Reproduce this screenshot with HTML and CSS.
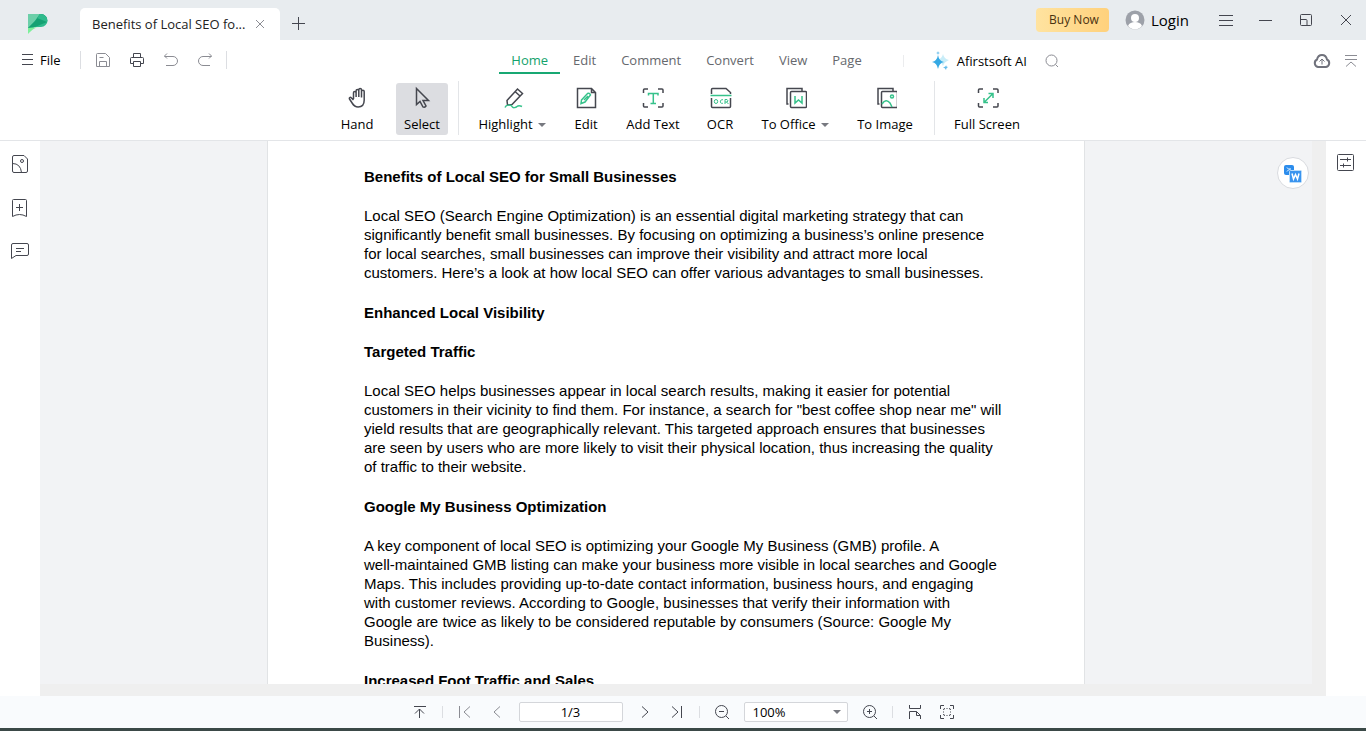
FILE: index.html
```html
<!DOCTYPE html>
<html lang="en">
<head>
<meta charset="utf-8">
<meta name="viewport" content="width=device-width, initial-scale=1">
<title>Benefits of Local SEO for Small Businesses</title>
<link rel="stylesheet" href="styles.css">
</head>
<body>
<div class="app">
  <header class="titlebar">
    <svg class="logo" width="20" height="20" viewBox="0 0 20 20" aria-hidden="true"><path fill="#2fba8c" d="M0 0h13a6.500 6.500 0 0 1 0 13H7L0 17z"/><path fill="#6ccfa9" d="M0 0h12L7 7 0 14z"/><path fill="#15a273" d="M7 7l5-7h1a6.500 6.500 0 0 1 6 8L7 13l-7 1z"/><path fill="#2fba8c" d="M12 0h1a6.500 6.500 0 0 1 6 8L9 4z"/><path fill="#7df09a" d="M0 20v-6l12-1C7 13 4 16 0 20z"/></svg>
    <div class="doc-tab">
      <span class="doc-name">Benefits of Local SEO fo...</span>
      <button class="icon-btn tab-close" aria-label="Close tab"><svg width="10" height="10" viewBox="0 0 10 10"><path d="M1 1l8 8M9 1l-8 8"/></svg></button>
    </div>
    <button class="icon-btn new-tab" aria-label="New tab"><svg class="dark" width="14" height="14" viewBox="0 0 14 14"><path d="M6.500 0v13M0 6.500h13"/></svg></button>
    <div class="window-tools">
      <button class="buy">Buy Now</button>
      <button class="login"><svg width="20" height="20" viewBox="0 0 20 20"><circle cx="10" cy="10" r="9.500" fill="#9da1a9" stroke="none"/><path d="M3 16c1-3 4-4 7-4s6 1 7 4c-4 4.500-10 4.500-14 0z" fill="#fff" stroke="none"/><circle cx="10" cy="8" r="4" fill="#fff" stroke="none"/></svg>Login</button>
      <button class="icon-btn win" aria-label="Menu"><svg class="dark" width="14" height="12" viewBox="0 0 14 12"><path d="M0 1.500h14M0 6.500h14M0 11.500h14"/></svg></button>
      <button class="icon-btn win" aria-label="Minimize"><svg class="dark" width="14" height="12" viewBox="0 0 14 12"><path d="M0 6.500h13"/></svg></button>
      <button class="icon-btn win" aria-label="Restore"><svg class="dark" width="12" height="12" viewBox="0 0 12 12"><rect x=".5" y=".5" width="11" height="11" rx="1"/><path d="M1 5.500h5q1 0 1 1V11"/></svg></button>
      <button class="icon-btn win" aria-label="Close"><svg class="dark" width="12" height="12" viewBox="0 0 12 12"><path d="M1 1l10 10M11 1L1 11"/></svg></button>
    </div>
  </header>

  <div class="menubar">
    <div class="quick">
      <button class="file"><svg class="dark" width="12" height="12" viewBox="0 0 12 12"><path d="M0 .5h11M0 5.500h11M0 10.500h11"/></svg>File</button>
      <span class="rule"></span>
      <button class="icon-btn q" aria-label="Save"><svg width="16" height="16" viewBox="0 0 16 16"><path d="M1.500 14.500v-12q0-1 1-1h8l4 4v9zM4.500 14.500v-5h7v5M4.500 5.500h4"/></svg></button>
      <button class="icon-btn q" aria-label="Print"><svg class="ink" width="16" height="16" viewBox="0 0 16 16"><path d="M4.500 5V1.500h7V5M4 11.500H1.500v-5q0-1 1-1h11q1 0 1 1v5H12M4.500 9.500h7v5h-7z"/></svg></button>
      <button class="icon-btn q" aria-label="Undo"><svg width="16" height="16" viewBox="0 0 16 16"><path d="M4 1.500L1.500 4 4 6.500M1.500 4.500H10a4 4 0 0 1 0 9H3"/></svg></button>
      <button class="icon-btn q" aria-label="Redo"><svg width="16" height="16" viewBox="0 0 16 16"><path d="M12 1.500L14.500 4 12 6.500M14.500 4.500H6a4 4 0 0 0 0 9h7"/></svg></button>
      <span class="rule"></span>
    </div>
    <nav class="tabs">
      <a class="active" href="#">Home</a><a href="#">Edit</a><a href="#">Comment</a><a href="#">Convert</a><a href="#">View</a><a href="#">Page</a>
    </nav>
    <div class="extras">
      <span class="rule faint"></span>
      <button class="ai"><svg width="18" height="20" viewBox="0 0 18 20"><g stroke="none"><path fill="#c9edf8" d="M11 3q1 5 6 6-5 2-6 6-2-5-6-6 5-1 6-6z"/><path fill="#35a9e4" d="M6 4q1 6 6 7-5 1-6 7-1-6-6-7 5-1 6-7z"/><path fill="#65bceb" d="M6 0q0 2 2 2-2 0-2 2 0-2-2-2 2 0 2-2zM14 14q0 2 2 2-2 1-2 3-1-2-3-3 3 0 3-2z"/></g></svg>Afirstsoft AI</button>
      <button class="icon-btn find" aria-label="Search"><svg width="14" height="14" viewBox="0 0 14 14"><circle cx="6.500" cy="6.500" r="5.500"/><path d="M10.500 10.500l2.500 2.500"/></svg></button>
      <button class="icon-btn cloud" aria-label="Upload to cloud"><svg width="18" height="16" viewBox="0 0 18 16"><path stroke="#70727c" stroke-width="2" d="M5 14a4 4 0 0 1-1-7.500Q5 2 9 2t5 4.500A4 4 0 0 1 13 14z"/><path stroke="#70727c" d="M9 11.500v-5M6.500 8.500L9 6l2.500 2.500"/></svg></button>
      <button class="icon-btn fold" aria-label="Collapse toolbar"><svg width="14" height="14" viewBox="0 0 14 14"><path d="M1 1.500h12M1 5.500h12M2 12.500l5-4.500 5 4.500"/></svg></button>
    </div>
  </div>

  <div class="toolbar">
    <button class="tool hand"><svg class="big" width="24" height="24" viewBox="-3 0 24 24"><path d="M5.500 13V6.800a1.300 1.300 0 0 1 2.600 0V11M8.100 11V4.800a1.300 1.300 0 0 1 2.700 0V11M10.800 11V3.800a1.300 1.300 0 0 1 2.700 0v7.700M13.500 11.500V5.500a1.300 1.300 0 0 1 2.700 0V14c0 4.500-2.500 7-6.100 7-3 0-4.500-1.500-6-4L1.500 13c-.7-1.200.8-2.200 1.700-1.300L5.500 14"/></svg><span>Hand</span></button>
    <button class="tool selected"><svg class="big" width="24" height="24" viewBox="0 0 24 24"><path d="M6.500 2.500v16l3.500-3 3 5.500q1.500 1 3-1l-3-5.500h5.500z"/></svg><span>Select</span></button>
    <span class="rule tall first"></span>
    <button class="tool highlight"><svg class="big" width="24" height="24" viewBox="-2 0 24 24"><path d="M5 14.500L15.500 3l5 4.500L10 18.500l-4.500.500zM13 5.500l5 4.500"/><path class="green" d="M3 21.500c1-3 6-3 7-1s4 1 5 0 3-1 5 0"/></svg><span>Highlight<i class="caret"></i></span></button>
    <button class="tool"><svg class="big" width="24" height="24" viewBox="-1 0 24 24"><path d="M2.500 2.500h14l4 4v15h-18zM16.500 2.500v4h4"/><path class="green" d="M6.500 14l6-6.500q2-1 3 1.500l-5.500 7-4 1.500zM9 14l4-4"/></svg><span>Edit</span></button>
    <button class="tool add-text"><svg class="big" width="24" height="24" viewBox="0 0 24 24"><path d="M2.500 7V4q0-1 1-1H7M17 3h4q1 0 1 1v3M22 17v3q0 1-1 1h-4M7 21H3.500q-1 0-1-1v-3"/><path class="green" d="M7.500 9.500V7.500h9.500v2M12.300 7.500V17M9.500 17.500H15"/></svg><span>Add Text</span></button>
    <button class="tool"><svg class="big" width="24" height="24" viewBox="-1 0 24 24"><path d="M2.500 8V3.500q0-1 1-1H17l4.500 4V8M2.500 12v8.500q0 1 1 1h17q1 0 1-1V12"/><path class="green" d="M1.500 9.500h21"/><g class="green thin"><ellipse cx="7" cy="15.500" rx="1.700" ry="2"/><path d="M14 13.800c-3-1.300-4 4.700 0 3.400M16 18v-4.500h2q2 1.500 0 2.500H16M17.500 16l2 2"/></g></svg><span>OCR</span></button>
    <button class="tool office"><svg class="big" width="24" height="24" viewBox="-2 0 24 24"><path d="M3.500 18H2V2.500h15v3"/><rect x="5.500" y="5.500" width="16" height="16" rx="1"/><path class="green" d="M10 10v7l3.500-3 3.500 3v-7"/></svg><span>To Office<i class="caret"></i></span></button>
    <button class="tool office"><svg class="big" width="24" height="24" viewBox="-3 0 24 24"><path d="M3.500 18H2V2.500h15v3"/><rect x="5.500" y="5.500" width="16" height="16" rx="1"/><path class="green" d="M6 18q4-6 8-1 1 2 2 4"/><circle class="green" cx="16" cy="10.500" r="1.500"/></svg><span>To Image</span></button>
    <span class="rule tall"></span>
    <button class="tool full"><svg class="big" width="24" height="24" viewBox="-2 0 24 24"><path d="M1.500 7V4q0-1 1-1H6M16 3h4q1 0 1 1v3M21 17v3q0 1-1 1h-4M6 21H2.500q-1 0-1-1v-3"/><path class="green" d="M7 16.500l9-9M11.500 7.500H16V12M11 16.500H7V12"/></svg><span>Full Screen</span></button>
  </div>

  <main class="workspace">
    <aside class="rail left">
      <button class="icon-btn" aria-label="Thumbnails"><svg class="ink" width="18" height="20" viewBox="0 0 18 20"><path d="M1.500 3q0-1.500 1.500-1.500h10l3.500 3.500v12q0 1.500-1.500 1.500H3q-1.500 0-1.500-1.500zM1.500 9.500q8 0 9 9"/><circle cx="11" cy="7" r="1.500"/></svg></button>
      <button class="icon-btn" aria-label="Bookmarks"><svg class="ink" width="18" height="20" viewBox="0 0 18 20"><path d="M1.500 18.500v-16q0-1 1-1h12q1 0 1 1v16q-7-4-14 0zM8.500 6v7M5 9.500h7"/></svg></button>
      <button class="icon-btn" aria-label="Comments"><svg class="ink" width="18" height="18" viewBox="0 0 18 18"><path d="M.5 16.500V3q0-1.500 1.500-1.500h14q1.500 0 1.500 1.500v9q0 1.500-1.500 1.500H5zM5 6.500h8M5 9.500h5"/></svg></button>
    </aside>
    <div class="viewer">
      <article class="sheet">
        <h1>Benefits of Local SEO for Small Businesses</h1>
        <p>Local SEO (Search Engine Optimization) is an essential digital marketing strategy that can<br>significantly benefit small businesses. By focusing on optimizing a business’s online presence<br>for local searches, small businesses can improve their visibility and attract more local<br>customers. Here’s a look at how local SEO can offer various advantages to small businesses.</p>
        <h2>Enhanced Local Visibility</h2>
        <h2>Targeted Traffic</h2>
        <p>Local SEO helps businesses appear in local search results, making it easier for potential<br>customers in their vicinity to find them. For instance, a search for "best coffee shop near me" will<br>yield results that are geographically relevant. This targeted approach ensures that businesses<br>are seen by users who are more likely to visit their physical location, thus increasing the quality<br>of traffic to their website.</p>
        <h2>Google My Business Optimization</h2>
        <p>A key component of local SEO is optimizing your Google My Business (GMB) profile. A<br>well-maintained GMB listing can make your business more visible in local searches and Google<br>Maps. This includes providing up-to-date contact information, business hours, and engaging<br>with customer reviews. According to Google, businesses that verify their information with<br>Google are twice as likely to be considered reputable by consumers (Source: Google My<br>Business).</p>
        <h2>Increased Foot Traffic and Sales</h2>
      </article>
      <button class="convert" aria-label="Convert to Word"><svg width="20" height="20" viewBox="0 0 20 20"><rect x="1" y="2" width="10" height="10" rx="2" fill="#2b8cec" stroke="none"/><path stroke="#fff" d="M4 4.500l2 2-2 2M6 6h2"/><rect x="6.500" y="7.500" width="12" height="12" rx="1" fill="#3a94ef" stroke="#b9dcfb"/><path stroke="#fff" stroke-width="1.500" d="M9 10.500l1.500 5.500 2-4.500 2 4.500 1.500-5.500"/></svg></button>
    </div>
    <aside class="rail right">
      <button class="icon-btn" aria-label="Properties"><svg class="ink" width="18" height="18" viewBox="0 0 18 18"><rect x=".5" y=".5" width="16" height="16" rx="1"/><path d="M3 5.500h11M10.500 3.500v4M3 11.500h11M6.500 9.500v4"/></svg></button>
    </aside>
  </main>

  <footer class="status">
    <button class="icon-btn s" aria-label="Scroll to top"><svg class="ink" width="14" height="14" viewBox="0 0 14 14"><path d="M1 1.500h12M6.500 13V4M2 8.500L6.500 4 11 8.500"/></svg></button>
    <span class="rule short"></span>
    <button class="icon-btn s" aria-label="First page"><svg width="14" height="14" viewBox="0 0 14 14"><path d="M1.500 1v12M12 1.500L6 7l6 5.500"/></svg></button>
    <button class="icon-btn s" aria-label="Previous page"><svg width="14" height="14" viewBox="0 0 14 14"><path d="M10 1.500L4 7l6 5.500"/></svg></button>
    <input class="field page-no" type="text" value="1/3" aria-label="Page number">
    <button class="icon-btn s" aria-label="Next page"><svg class="ink" width="14" height="14" viewBox="0 0 14 14"><path d="M4 1.500L10 7l-6 5.500"/></svg></button>
    <button class="icon-btn s" aria-label="Last page"><svg class="ink" width="14" height="14" viewBox="0 0 14 14"><path d="M2 1.500L8 7l-6 5.500M11.500 1v12"/></svg></button>
    <span class="rule short"></span>
    <button class="icon-btn s" aria-label="Zoom out"><svg class="ink" width="16" height="16" viewBox="0 0 16 16"><circle cx="7.500" cy="7.500" r="6"/><path d="M12 12l3 3M5 7.500h5"/></svg></button>
    <div class="zoom"><select class="field" aria-label="Zoom level"><option>100%</option></select><i class="caret"></i></div>
    <button class="icon-btn s" aria-label="Zoom in"><svg class="ink" width="16" height="16" viewBox="0 0 16 16"><circle cx="7.500" cy="7.500" r="6"/><path d="M12 12l3 3M5 7.500h5M7.500 5v5"/></svg></button>
    <span class="rule short"></span>
    <button class="icon-btn s" aria-label="Fit width"><svg class="ink" width="14" height="16" viewBox="0 0 14 16"><path d="M1.500 1v3.500h11V1M1.500 15V7.500h7l4 4V15M8.500 7.500v4h4"/></svg></button>
    <button class="icon-btn s" aria-label="Fit page"><svg class="ink" width="16" height="16" viewBox="0 0 16 16"><path d="M1.500 5V1.500H5M11 1.500h3.500V5M14.500 11v3.500H11M5 14.500H1.500V11M4.500 6q0-1.500 1.500-1.500M10 4.500q1.500 0 1.500 1.500M4.500 10q0 1.500 1.500 1.500M10 11.500q1.500 0 1.500-1.500M7.500 4.500h1M7.500 11.500h1M4.500 7.500v1M11.500 7.500v1"/></svg></button>
  </footer>
  <div class="desktop-edge"></div>
</div>
</body>
</html>
```
FILE: styles.css
```css
* { box-sizing: border-box; }

body {
  margin: 0;
  font-family: "Open Sans", "Noto Sans", sans-serif;
  font-size: 13px;
  line-height: 18px;
  color: #000;
}

.app {
  display: flex;
  flex-direction: column;
  height: 100vh;
  overflow: hidden;
  background: #fff;
}

button {
  padding: 0;
  border: 0;
  background: none;
  color: inherit;
  font: inherit;
  white-space: nowrap;
}

svg {
  display: block;
  flex: none;
  fill: none;
  stroke: #8b8c93;
}

.dark, .ink { stroke: #44464f; }
.logo { stroke: none; }

.icon-btn {
  display: flex;
  align-items: center;
  justify-content: center;
}

.rule {
  flex: none;
  width: 1px;
  height: 18px;
  background: #dcdee2;
}
.rule.faint { height: 12px; background: #ebecee; }
.rule.short { height: 12px; margin: 0 6px; }

.caret {
  display: inline-block;
  border: 4px solid transparent;
  border-top-color: #777980;
  border-bottom: 0;
}

/* Title bar */
.titlebar {
  display: flex;
  align-items: center;
  flex: none;
  height: 40px;
  padding-left: 28px;
  background: #e8ecef;
}
.logo { margin: 8px 32px 0 0; }
.doc-tab {
  display: flex;
  align-items: center;
  justify-content: space-between;
  align-self: flex-end;
  width: 200px;
  height: 32px;
  padding: 0 14px 0 12px;
  border-radius: 5px 5px 0 0;
  background: #fff;
  color: #222;
}
.doc-name { white-space: nowrap; }
.tab-close { width: 12px; height: 24px; }
.new-tab { width: 37px; height: 40px; margin-top: 8px; }
.window-tools {
  display: flex;
  align-items: center;
  margin-left: auto;
}
.buy {
  width: 73px;
  height: 24px;
  padding-left: 3px;
  border-radius: 4px;
  background: linear-gradient(90deg, #ffe3a0, #ffd17c);
  color: #4a3210;
  font-size: 12px;
}
.login {
  display: flex;
  align-items: center;
  gap: 6px;
  margin: 0 17px 0 16px;
  font-size: 15px;
}
.win { width: 40px; height: 40px; }

/* Menu row */
.menubar {
  display: grid;
  grid-template-columns: 1fr auto 1fr;
  align-items: center;
  flex: none;
  height: 37px;
}
.quick {
  display: flex;
  align-items: center;
  padding: 3px 0 0 22px;
}
.file {
  display: flex;
  align-items: center;
  gap: 6px;
  margin-right: 19px;
}
.q { width: 34px; height: 28px; }
.quick .rule + .q { margin-left: 5px; }
.q + .rule { margin-left: 4px; }
.tabs {
  display: flex;
  gap: 1px;
  align-self: end;
  height: 33px;
  padding-left: 7px;
}
.tabs a {
  display: flex;
  align-items: center;
  height: 30px;
  padding: 6px 12px 2px;
  border-bottom: 2px solid transparent;
  color: #66686d;
  text-decoration: none;
}
.tabs .active { border-color: #18a873; color: #14a26c; }
.extras {
  display: flex;
  align-items: center;
  padding: 4px 8px 0 29px;
}
.ai {
  display: flex;
  align-items: center;
  gap: 7px;
  margin: 0 18px 0 28px;
}
.cloud { margin-left: auto; }
.fold { margin-left: 13px; }

/* Tool row */
.toolbar {
  display: flex;
  justify-content: center;
  gap: 8px;
  flex: none;
  height: 64px;
  padding: 6px 4px 5px 0;
  border-bottom: 1px solid #e3e5e8;
}
.tool {
  display: flex;
  flex-direction: column;
  align-items: center;
  gap: 5px;
  width: 52px;
  height: 52px;
  padding-top: 3px;
  border-radius: 3px;
}
.tool .caret { margin: 0 0 2px 5px; }
.hand { margin-right: 5px; }
.selected { background: #dcdde1; }
.highlight { width: 80px; }
.add-text { width: 66px; }
.office { width: 82px; }
.full { width: 88px; }
.big { stroke: #45474f; stroke-width: 1.5; }
.green { stroke: #36c28b; }
.thin { stroke-width: 1; }
.tall { height: 54px; margin-top: -2px; background: #e3e5e8; }
.first { margin-left: 2px; margin-right: 5px; }

/* Document area */
.workspace {
  display: flex;
  flex: 1;
  min-height: 0;
}
.rail {
  display: flex;
  flex-direction: column;
  align-items: center;
  flex: none;
  gap: 24px;
  width: 40px;
  padding-top: 13px;
}
.viewer {
  position: relative;
  flex: 1;
  min-width: 0;
  overflow: hidden;
  border: solid #efefef;
  border-width: 0 14px 12px 0;
  background: #f2f3f5;
}
.sheet {
  width: 816px;
  min-height: 1056px;
  margin: 0 auto;
  padding: 26px 96px;
  background: #fff;
  box-shadow: 0 0 0 1px #e1e3e5;
  font-family: "Liberation Sans", Arial, sans-serif;
  font-size: 15px;
  line-height: 19px;
  white-space: nowrap;
}
.sheet h1, .sheet h2 {
  margin: 0 0 20px;
  font-size: 15px;
  line-height: 19px;
}
.sheet p { margin: 0 0 21px; }
.convert {
  position: absolute;
  top: 16px;
  right: 3px;
  display: grid;
  place-items: center;
  width: 32px;
  height: 32px;
  border: 1px solid #d9dbdf;
  border-radius: 50%;
  background: #fff;
}

/* Status bar */
.status {
  display: flex;
  align-items: center;
  justify-content: center;
  flex: none;
  height: 32px;
  background: #f9fbfd;
}
.s { width: 32px; height: 28px; }
.field {
  width: 104px;
  height: 20px;
  margin: 0 6px;
  padding: 0 8px;
  border: 1px solid #d4d6da;
  border-radius: 2px;
  background: #fff;
  color: #000;
  font: inherit;
  appearance: none;
}
.page-no { text-align: center; }
.zoom { position: relative; display: flex; }
.zoom .caret {
  position: absolute;
  top: 8px;
  right: 13px;
  pointer-events: none;
}
.desktop-edge {
  flex: none;
  height: 3px;
  background: #3b4947;
}
```
